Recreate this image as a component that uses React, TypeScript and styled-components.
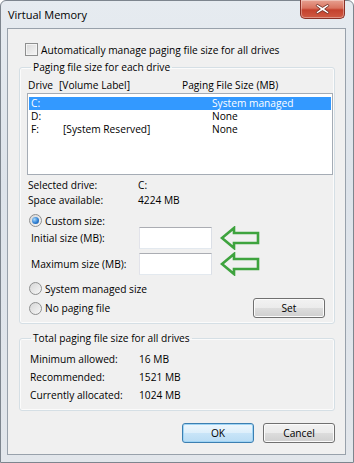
import React from 'react';
import styled, { createGlobalStyle } from 'styled-components';

const GlobalStyle = createGlobalStyle`
  html, body {
    margin: 0;
    padding: 0;
    background: #fff;
  }
  body {
    font-family: "Open Sans", "Noto Sans", sans-serif;
    font-size: 10.2px;
    color: #000;
  }
`;

const Window = styled.div`
  width: 354px;
  height: 463px;
  box-sizing: border-box;
  display: flex;
  flex-direction: column;
  padding: 0 7px 7px 6px;
  border: 1px solid #7d858e;
  border-radius: 6px 6px 0 0;
  background: linear-gradient(to bottom, #e6ebf0 0%, #dde3ea 40%, #e2e6eb 100%);
`;

const TitleBar = styled.div`
  height: 27px;
  display: flex;
  align-items: center;
  padding-left: 1px;
  h1 {
    margin: 0;
    flex: 1;
    font-size: 11px;
    font-weight: normal;
    color: #000;
  }
`;

const CloseButton = styled.div`
  align-self: flex-start;
  margin-top: -1px;
  margin-right: 1px;
  width: 45px;
  height: 19px;
  box-sizing: border-box;
  display: flex;
  align-items: center;
  justify-content: center;
  border: 1px solid #8a3026;
  border-top: none;
  border-radius: 0 0 5px 5px;
  background: linear-gradient(to bottom, #e7a191 0%, #d9735f 45%, #c4412d 55%, #cf5a43 100%);
  box-shadow: inset 0 0 0 1px rgba(255, 255, 255, 0.35);
`;

const Client = styled.div`
  flex: 1;
  display: flex;
  flex-direction: column;
  padding: 0 10px 0 11px;
  border: 1px solid #98a1ab;
  background: #f0f0f0;
`;

const CheckRow = styled.label`
  display: flex;
  align-items: center;
  gap: 3px;
  height: 13px;
  margin: 14px 0 0 6px;
`;

const CheckBox = styled.span`
  width: 13px;
  height: 13px;
  box-sizing: border-box;
  border: 1px solid #8e8f8f;
  background: linear-gradient(135deg, #d9d9d9 0%, #f6f6f6 100%);
  box-shadow: inset 0 0 0 1px #f4f4f4;
`;

const Group = styled.fieldset<{ $top: number; $bottom: number }>`
  margin: ${p => p.$top}px 0 0 0;
  padding: 0 1px ${p => p.$bottom}px 7px;
  min-width: 0;
  border: 1px solid #d5dfe5;
  border-radius: 3px;
  box-shadow: inset 0 0 0 1px #fbfbfb;
  legend {
    margin-left: 4px;
    padding: 0 2px;
    line-height: 14px;
  }
`;

const HeaderRow = styled.div`
  display: flex;
  height: 14px;
  line-height: 14px;
  margin-top: 4px;
  padding-left: 1px;
  span:nth-child(1) { width: 31px; }
  span:nth-child(2) { width: 123px; }
`;

const ListBox = styled.div`
  height: 82px;
  margin: 1px 0 0 0;
  box-sizing: border-box;
  padding: 3px 1px 0 1px;
  border: 1px solid #a5acb5;
  background: #fff;
`;

const ListRow = styled.div<{ $selected?: boolean }>`
  display: flex;
  height: 13px;
  line-height: 13px;
  padding-left: 2px;
  background: ${p => (p.$selected ? '#3399ff' : 'transparent')};
  color: ${p => (p.$selected ? '#fff' : '#000')};
  span:nth-child(1) { width: 32px; }
  span:nth-child(2) { width: 149px; }
`;

const InfoGrid = styled.div<{ $top: number; $row: number; $label: number; $indent: number }>`
  display: grid;
  grid-template-columns: ${p => p.$label}px 1fr;
  grid-auto-rows: ${p => p.$row}px;
  align-items: center;
  margin-top: ${p => p.$top}px;
  padding-left: ${p => p.$indent}px;
`;

const RadioRow = styled.label<{ $top: number }>`
  display: flex;
  align-items: center;
  gap: 3px;
  height: 13px;
  margin: ${p => p.$top}px 0 0 2px;
`;

const Radio = styled.span<{ $checked?: boolean }>`
  width: 13px;
  height: 13px;
  box-sizing: border-box;
  border-radius: 50%;
  border: 1px solid #8e8f8f;
  background: linear-gradient(135deg, #d6d6d6 0%, #f7f7f7 100%);
  display: flex;
  align-items: center;
  justify-content: center;
  &::after {
    content: '';
    display: ${p => (p.$checked ? 'block' : 'none')};
    width: 7px;
    height: 7px;
    border-radius: 50%;
    background: radial-gradient(circle at 35% 35%, #a6d8fb 0%, #2f7fd3 55%, #134d93 100%);
  }
`;

const SizeRow = styled.div<{ $top: number }>`
  display: flex;
  align-items: center;
  height: 22px;
  margin-top: ${p => p.$top}px;
  padding-left: 4px;
  > span {
    width: 108px;
  }
`;

const TextBox = styled.div`
  width: 73px;
  height: 22px;
  box-sizing: border-box;
  border: 1px solid;
  border-color: #abadb3 #dbdfe6 #e3e9ef #e2e3ea;
  background: #fff;
  margin-right: 8px;
`;

const BottomRow = styled.div`
  display: flex;
  align-items: center;
  justify-content: space-between;
  height: 20px;
  margin-top: 3px;
  padding-right: 8px;
  > label {
    margin-top: 0;
  }
`;

const Button = styled.div<{ $default?: boolean }>`
  width: 72px;
  height: 20px;
  box-sizing: border-box;
  display: flex;
  align-items: center;
  justify-content: center;
  border: 1px solid ${p => (p.$default ? '#3c7fb1' : '#707070')};
  border-radius: 3px;
  background: ${p =>
    p.$default
      ? 'linear-gradient(to bottom, #eef7fd 0%, #ddeffb 50%, #c9e5f8 50%, #b9dcf4 100%)'
      : 'linear-gradient(to bottom, #f2f2f2 0%, #ebebeb 50%, #dddddd 50%, #cfcfcf 100%)'};
  box-shadow: inset 0 0 0 1px ${p => (p.$default ? '#9fd4f5' : '#fbfbfb')};
`;

const ButtonRow = styled.div`
  display: flex;
  justify-content: flex-end;
  gap: 9px;
  margin-top: 12px;
`;

const Arrow = () => (
  <svg width="40" height="24" viewBox="0 0 40 24">
    <path
      d="M2 12 L14 2 L14 7 L38 7 L38 17 L14 17 L14 22 Z"
      fill="none"
      stroke="#3ea33e"
      strokeWidth="2.6"
      strokeLinejoin="miter"
    />
  </svg>
);

const CloseGlyph = () => (
  <svg width="15" height="12" viewBox="0 0 14 11">
    <path
      d="M2 1 L7 4 L12 1 L13 2.5 L9 5.5 L13 8.5 L12 10 L7 7 L2 10 L1 8.5 L5 5.5 L1 2.5 Z"
      fill="#fff"
      stroke="#6b2a22"
      strokeWidth="0.8"
    />
  </svg>
);

const drives = [
  { drive: 'C:', label: '', size: 'System managed' },
  { drive: 'D:', label: '', size: 'None' },
  { drive: 'F:', label: '[System Reserved]', size: 'None' },
];

export default function App() {
  return (
    <>
      <GlobalStyle />
      <Window>
        <TitleBar>
          <h1>Virtual Memory</h1>
          <CloseButton>
            <CloseGlyph />
          </CloseButton>
        </TitleBar>
        <Client>
          <CheckRow>
            <CheckBox />
            <span>Automatically manage paging file size for all drives</span>
          </CheckRow>

          <Group $top={4} $bottom={5}>
            <legend>Paging file size for each drive</legend>
            <HeaderRow>
              <span>Drive</span>
              <span>[Volume Label]</span>
              <span>Paging File Size (MB)</span>
            </HeaderRow>
            <ListBox>
              {drives.map((d, i) => (
                <ListRow key={d.drive} $selected={i === 0}>
                  <span>{d.drive}</span>
                  <span>{d.label}</span>
                  <span>{d.size}</span>
                </ListRow>
              ))}
            </ListBox>
            <InfoGrid $top={2} $row={15} $label={110} $indent={1}>
              <span>Selected drive:</span>
              <span>C:</span>
              <span>Space available:</span>
              <span>4224 MB</span>
            </InfoGrid>
            <RadioRow $top={7}>
              <Radio $checked />
              <span>Custom size:</span>
            </RadioRow>
            <SizeRow $top={0}>
              <span>Initial size (MB):</span>
              <TextBox />
              <Arrow />
            </SizeRow>
            <SizeRow $top={4}>
              <span>Maximum size (MB):</span>
              <TextBox />
              <Arrow />
            </SizeRow>
            <RadioRow $top={7}>
              <Radio />
              <span>System managed size</span>
            </RadioRow>
            <BottomRow>
              <RadioRow $top={0}>
                <Radio />
                <span>No paging file</span>
              </RadioRow>
              <Button>Set</Button>
            </BottomRow>
          </Group>

          <Group $top={7} $bottom={6}>
            <legend>Total paging file size for all drives</legend>
            <InfoGrid $top={5} $row={18} $label={109} $indent={3}>
              <span>Minimum allowed:</span>
              <span>16 MB</span>
              <span>Recommended:</span>
              <span>1521 MB</span>
              <span>Currently allocated:</span>
              <span>1024 MB</span>
            </InfoGrid>
          </Group>

          <ButtonRow>
            <Button $default>OK</Button>
            <Button>Cancel</Button>
          </ButtonRow>
        </Client>
      </Window>
    </>
  );
}
